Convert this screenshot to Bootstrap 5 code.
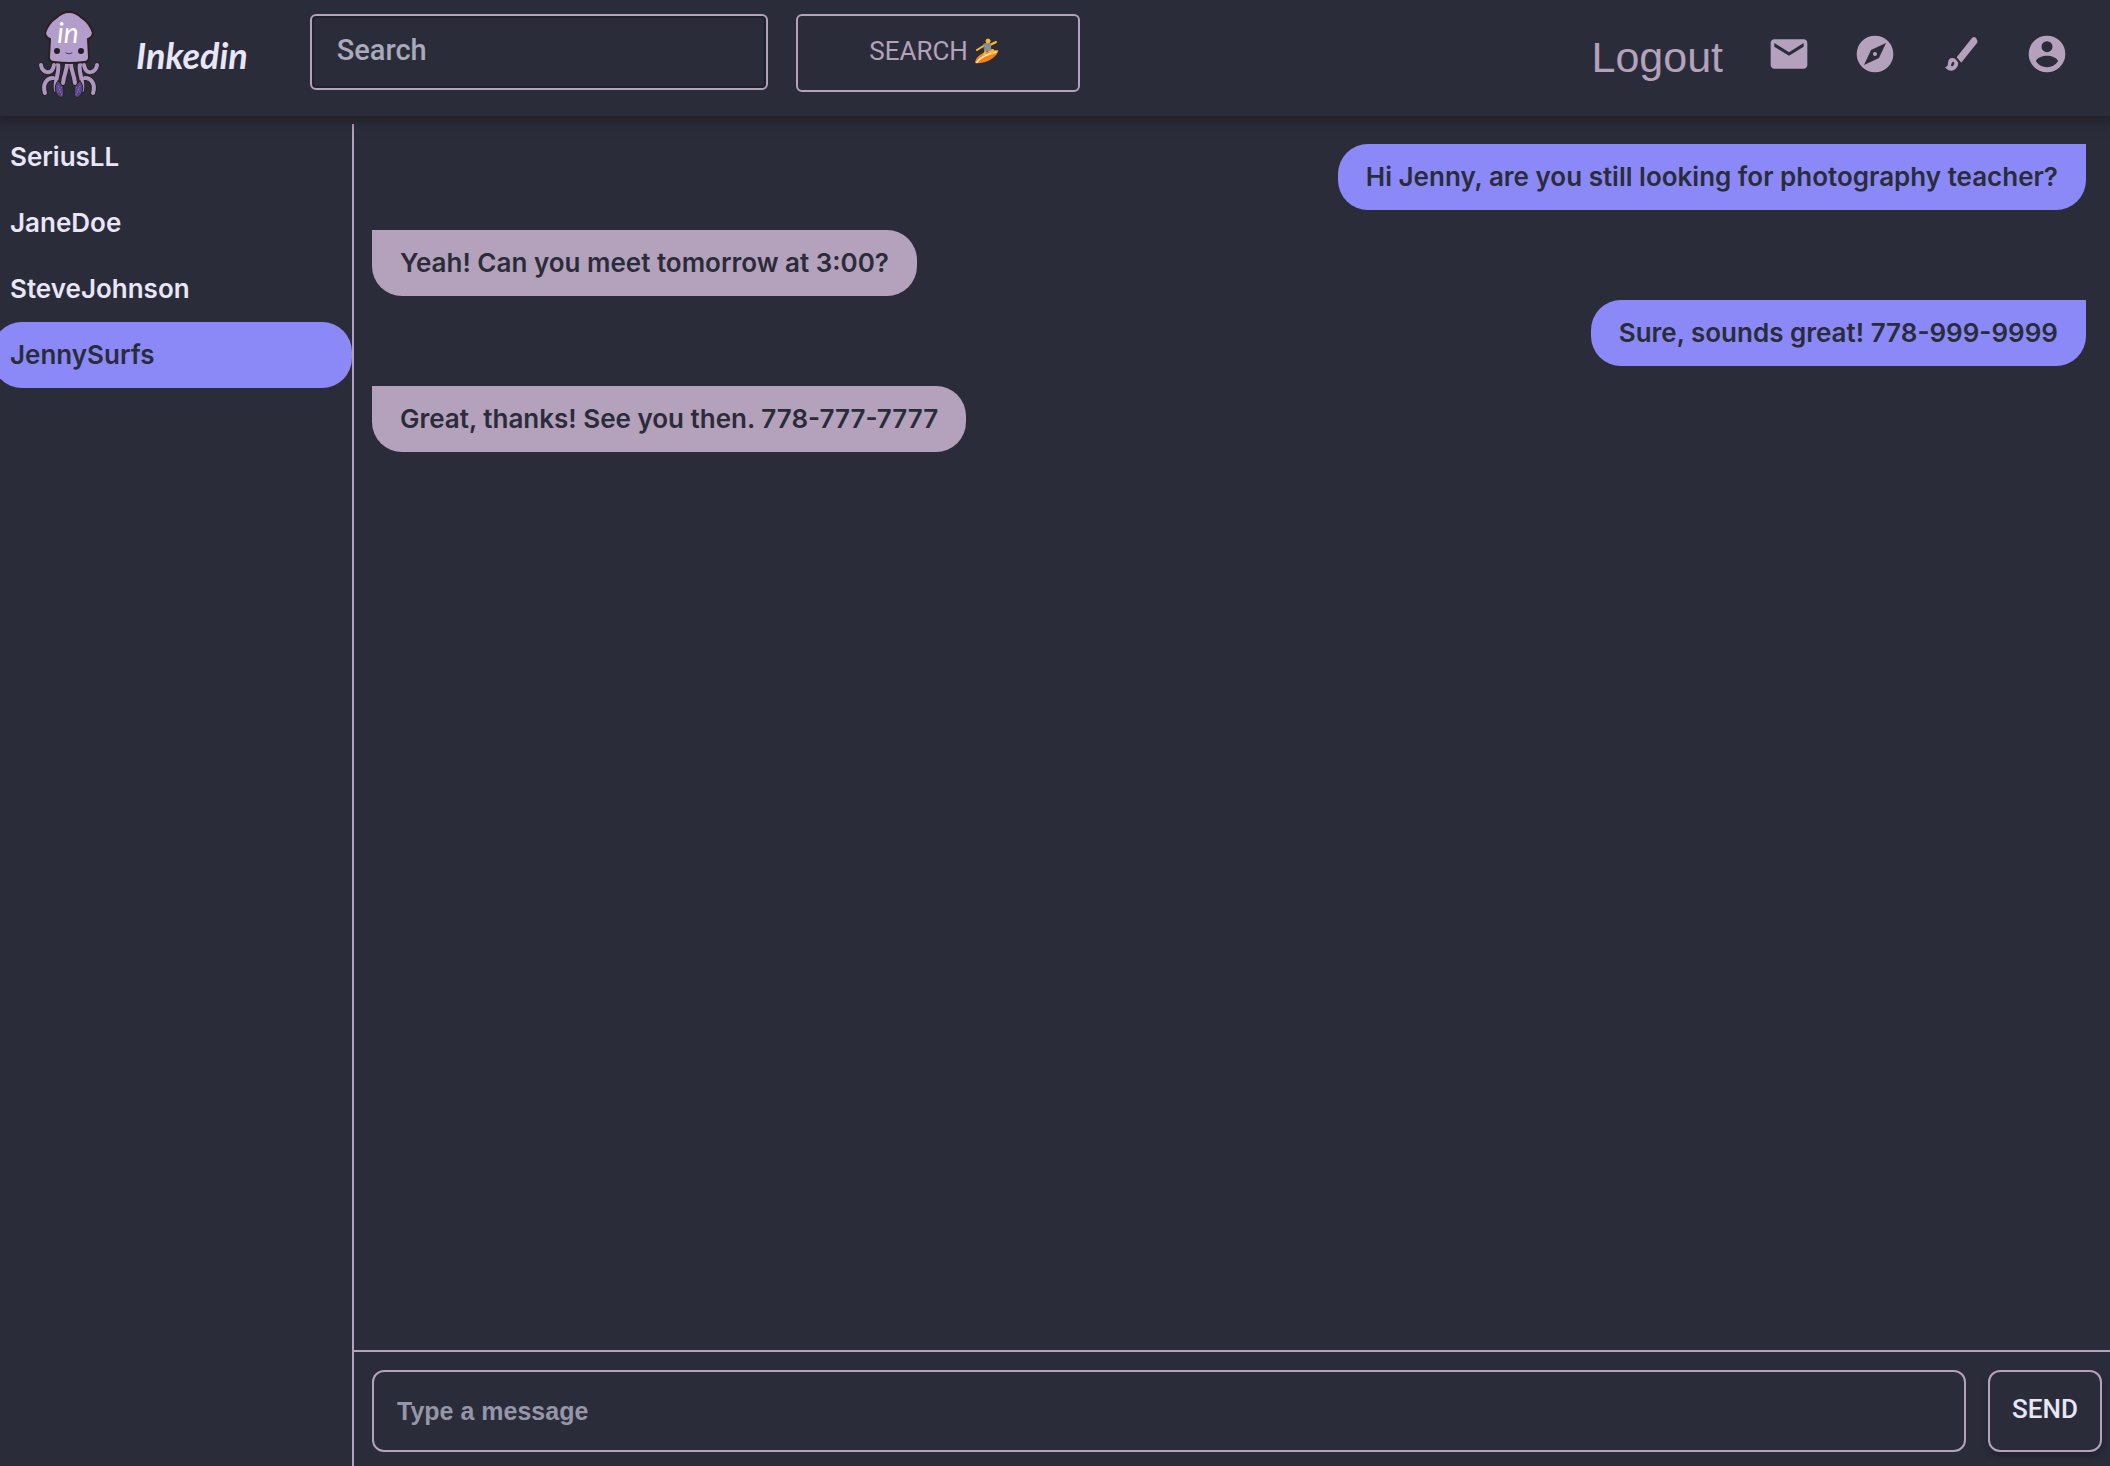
<!DOCTYPE html>
<html lang="en">
<head>
<meta charset="utf-8">
<meta name="viewport" content="width=device-width, initial-scale=1">
<title>Inkedin</title>
<link href="https://cdn.jsdelivr.net/npm/bootstrap@5.3.0/dist/css/bootstrap.min.css" rel="stylesheet">
<style>
:root{--ink:#2b2c3a;--lilac:#b4a1bb;--violet:#8a89f7;--pale:#e8e6f8;--soft:#a9aabb}
body{background:var(--ink);color:var(--pale);font-family:Inter,"Noto Sans",sans-serif;font-size:26px;line-height:30px;font-weight:600}
.topbar{height:116px;padding:0 41px 0 38px;box-shadow:0 0 12px 4px rgba(22,20,30,.6);background:var(--ink)}
.brand-name{font-family:Lato,sans-serif;font-style:italic;font-weight:700;font-size:36px;line-height:40px;color:var(--pale);margin-left:36px}
.search-area{padding-top:14px;margin-left:62px;gap:28px}
.search-box{width:458px;height:76px;background:transparent;border:2px solid var(--lilac);border-radius:6px;padding:0 25px 4px;font-family:Roboto,sans-serif;font-weight:500;font-size:29px;color:var(--pale);box-shadow:inset 0 0 1px 2px #20212c}
.search-box::placeholder{color:var(--soft);opacity:1}
.search-box:focus,.msg-box:focus{background:transparent;color:var(--pale);border-color:var(--violet)}
.search-btn{width:284px;height:78px;border:2px solid var(--lilac);border-radius:6px;color:var(--lilac);font-family:Roboto,sans-serif;font-weight:400;font-size:26px;padding:0 6px 4px 0}
.search-btn svg{vertical-align:-4px}
.tools{gap:42px;height:108px}
.tools a{color:var(--lilac);display:block}
.tools .logout{font-family:"Liberation Sans",sans-serif;font-weight:400;font-size:43px;line-height:50px;padding-top:6px;padding-right:2px;text-decoration:none}
.tools svg{display:block;width:44px;height:44px}
.workspace{padding-top:8px}
.people{width:354px;border-right:2px solid var(--lilac);overflow:hidden}
.people a{display:block;height:66px;line-height:66px;margin-left:-8px;padding-left:18px;border-radius:30px;color:var(--pale);text-decoration:none}
.people a.active{background:var(--violet);color:var(--ink)}
.thread{padding:20px 24px 20px 18px}
.bubble{padding:18px 28px;color:var(--ink)}
.sent{align-self:flex-end;background:var(--violet);border-radius:30px 0 30px 30px}
.got{align-self:flex-start;background:var(--lilac);border-radius:0 30px 30px 30px;margin:20px 0 4px}
.composer{border-top:2px solid var(--lilac);padding:18px 8px 14px 18px;gap:22px}
.msg-box{height:82px;background:transparent;border:2px solid var(--lilac);border-radius:12px;padding:0 23px;font-family:"Liberation Sans",sans-serif;font-weight:700;font-size:25px;color:var(--pale)}
.msg-box::placeholder{color:#9596a7;opacity:1}
.send-btn{width:114px;height:82px;flex:none;border:2px solid var(--lilac);border-radius:12px;color:var(--pale);font-family:Roboto,sans-serif;font-weight:500;font-size:26px;padding:0 0 4px;box-shadow:0 4px 6px rgba(0,0,0,.25)}
.btn:hover{color:var(--violet);border-color:var(--violet)}
</style>
</head>
<body class="d-flex flex-column min-vh-100">
<header class="topbar d-flex align-items-start position-relative">
  <a href="#" class="d-flex align-items-center text-decoration-none pt-2" aria-label="Inkedin home">
    <svg width="62" height="94" viewBox="0 0 62 94" fill="none" stroke-linecap="round" stroke-linejoin="round">
      <defs>
        <path id="arms" d="M3 57C4 65 14 68 16 57M59 57C58 65 48 68 46 57M7 85C4 76 9 70 15 70M55 85C58 76 53 70 47 70M20 56C22 65 16 72 18 82M42 56C40 65 46 72 44 82M29 56C29 62 26 66 25 75M33 56C33 62 36 66 37 75"/>
      </defs>
      <use href="#arms" stroke="#2a211f" stroke-width="6"/>
      <use href="#arms" stroke="#ae96c3" stroke-width="4"/>
      <path d="M20 73C15 78 17 87 23 90C28 86 26 77 20 73ZM42 73C47 78 45 87 39 90C34 86 36 77 42 73Z" fill="#5a4488" stroke="#2a211f"/>
      <path d="M20 78L24 87M24 79L20 84M42 78L38 87M38 79L42 84" stroke="#8d72c4" stroke-dasharray="1 2"/>
      <path d="M31 4C26 4 22 6 18 10C12 14 9 19 7 25Q8 30 12 31L11 49Q11 54 16 54Q31 56 46 54Q51 54 51 49L50 31Q54 30 55 25C53 19 50 14 44 10C40 6 36 4 31 4Z" fill="#b39dca" stroke="#2a211f" stroke-width="2"/>
      <circle cx="19" cy="43" r="3" fill="#251f24"/><circle cx="43" cy="43" r="3" fill="#251f24"/>
      <path d="M28 45Q31 47 34 45" stroke="#4c3b50"/>
      <text x="30" y="35" text-anchor="middle" fill="#fff" font-family="Lato" font-style="italic" font-weight="400" font-size="28">in</text>
    </svg>
    <span class="brand-name">Inkedin</span>
  </a>
  <form class="search-area d-flex align-items-start" onsubmit="return false">
    <input class="form-control search-box" type="search" placeholder="Search" aria-label="Search">
    <button class="btn search-btn" type="submit">SEARCH
      <svg width="26" height="26" viewBox="0 0 26 26" fill="none" stroke-linecap="round" stroke-linejoin="round" aria-hidden="true">
        <path d="M1 25C1 19 9 12 24 12C26 15 15 27 1 25Z" fill="#f47f1c"/>
        <path d="M3 24C6 20 13 16 22 14" stroke="#ffe0a8" stroke-width="2"/>
        <path d="M11 7L3 12M16 7L22 4M12 12L10 17M15 13L19 12L18 16" stroke="#fdbd1c" stroke-width="2"/>
        <path d="M10 6L16 5L17 12L11 13Z" fill="#8a8d94" stroke="#8a8d94"/>
        <circle cx="14" cy="3" r="2" fill="#fdbd1c" stroke="#fdbd1c"/>
      </svg>
    </button>
  </form>
  <nav class="tools d-flex align-items-center ms-auto" aria-label="Account">
    <a href="#" class="logout">Logout</a>
    <a href="#" aria-label="Messages"><svg viewBox="0 0 24 24" fill="currentColor"><path d="M20 4H4c-1.100 0-2 .9-2 2v12c0 1.100.9 2 2 2h16c1.100 0 2-.9 2-2V6c0-1.100-.9-2-2-2zm0 4l-8 5-8-5V6l8 5 8-5v2z"/></svg></a>
    <a href="#" aria-label="Explore"><svg viewBox="0 0 24 24" fill="currentColor"><path d="M12 10.900a1.100 1.100 0 1 0 0 2.200 1.100 1.100 0 0 0 0-2.200zM12 2a10 10 0 1 0 0 20 10 10 0 0 0 0-20zm2.190 12.190L6 18l3.810-8.190L18 6l-3.810 8.190z"/></svg></a>
    <a href="#" aria-label="Artwork"><svg viewBox="0 0 44 44" fill="currentColor"><path d="M17 26L33 6Q35 4 37 6L38 8Q39 9 38 11L22 31Q19 31 17 26Z"/><path fill-rule="evenodd" d="M6 35Q9 35 9 31C9 26 13 25 17 27C21 30 19 36 15 38C12 40 8 38 6 35ZM12 33Q12 35 14 34Q16 32 15 30Q13 29 12 33Z"/><path d="M16 25L22 32" stroke="#2b2c3a" stroke-width="2"/></svg></a>
    <a href="#" aria-label="Profile"><svg viewBox="0 0 24 24" fill="currentColor"><path d="M12 2a10 10 0 1 0 0 20 10 10 0 0 0 0-20zm0 3a3 3 0 1 1 0 6 3 3 0 0 1 0-6zm0 14.200a7.200 7.200 0 0 1-6-3.220c.03-1.990 4-3.080 6-3.080s5.970 1.090 6 3.080a7.200 7.200 0 0 1-6 3.220z"/></svg></a>
  </nav>
</header>
<main class="workspace d-flex flex-grow-1">
  <nav class="people flex-shrink-0" aria-label="Conversations">
    <a href="#">SeriusLL</a>
    <a href="#">JaneDoe</a>
    <a href="#">SteveJohnson</a>
    <a href="#" class="active" aria-current="true">JennySurfs</a>
  </nav>
  <section class="d-flex flex-column flex-grow-1">
    <div class="thread d-flex flex-column flex-grow-1">
      <div class="bubble sent">Hi Jenny, are you still looking for photography teacher?</div>
      <div class="bubble got">Yeah! Can you meet tomorrow at 3:00?</div>
      <div class="bubble sent">Sure, sounds great! 778-999-9999</div>
      <div class="bubble got">Great, thanks! See you then. 778-777-7777</div>
    </div>
    <form class="composer d-flex" onsubmit="return false">
      <input class="form-control msg-box" type="text" placeholder="Type a message" aria-label="Message">
      <button class="btn send-btn" type="submit">SEND</button>
    </form>
  </section>
</main>
<script src="https://cdn.jsdelivr.net/npm/bootstrap@5.3.0/dist/js/bootstrap.bundle.min.js"></script>
</body>
</html>
